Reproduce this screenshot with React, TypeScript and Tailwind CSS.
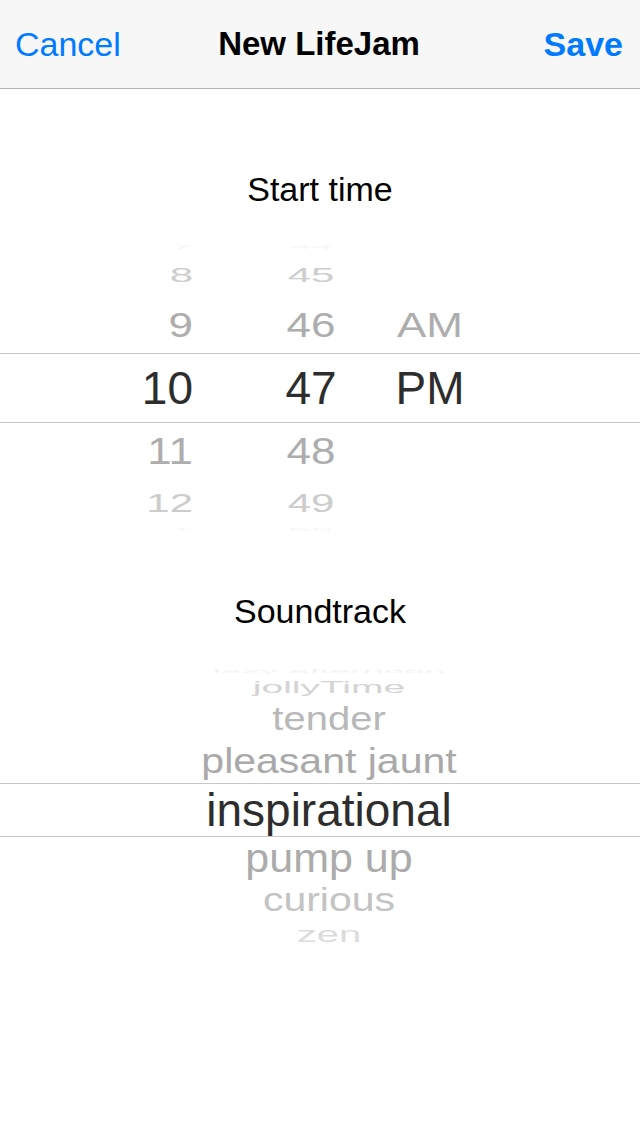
import React from 'react'

// Time wheel rows, from top to bottom. The selected row is drawn separately.
const timeAbove = [
  { id: 'r7', rowClass: 'h-[10px] leading-[10px] text-[40px] scale-y-[0.12] text-[#f6f6f6]', hour: '7', minute: '44', period: '' },
  { id: 'r8', rowClass: 'h-[45px] leading-[45px] text-[42px] scale-y-[0.5] text-[#cdcdcd]', hour: '8', minute: '45', period: '' },
  { id: 'r9', rowClass: 'h-[56px] leading-[56px] text-[44px] scale-y-[0.8] text-[#adadad]', hour: '9', minute: '46', period: 'AM' },
]

const timeBelow = [
  { id: 'r11', rowClass: 'h-[57px] leading-[57px] text-[44px] scale-y-[0.83] text-[#adadad]', hour: '11', minute: '48', period: '' },
  { id: 'r12', rowClass: 'h-[47px] leading-[47px] text-[42px] scale-y-[0.6] text-[#cccccc]', hour: '12', minute: '49', period: '' },
  { id: 'r1', rowClass: 'h-[6px] leading-[6px] text-[40px] scale-y-[0.1] text-[#f6f6f6]', hour: '1', minute: '50', period: '' },
]

// Soundtrack wheel rows
const tracksAbove = [
  { label: 'lazy afternoon', rowClass: 'h-[12px] leading-[12px] text-[37px] scale-y-[0.14] text-[#f3f3f3]' },
  { label: 'jollyTime', rowClass: 'h-[21px] leading-[21px] text-[39px] scale-y-[0.4] text-[#d4d4d4]' },
  { label: 'tender', rowClass: 'h-[41px] leading-[41px] text-[40px] scale-y-[0.83] text-[#b8b8b8]' },
  { label: 'pleasant jaunt', rowClass: 'h-[44px] leading-[44px] text-[41px] scale-y-[0.86] text-[#a9a9a9]' },
]

const tracksBelow = [
  { label: 'pump up', rowClass: 'h-[42px] leading-[42px] text-[43px] scale-y-[0.95] text-[#ababab]' },
  { label: 'curious', rowClass: 'h-[43px] leading-[43px] text-[41px] scale-y-[0.79] text-[#c3c3c3]' },
  { label: 'zen', rowClass: 'h-[24px] leading-[24px] text-[40px] scale-y-[0.56] text-[#dcdcdc]' },
]

function TimeRow({ rowClass, hour, minute, period }: { rowClass: string; hour: string; minute: string; period: string }) {
  return (
    <div className={`flex whitespace-nowrap ${rowClass}`}>
      <div className="w-[193px] text-right">{hour}</div>
      <div className="ml-[68px] w-[100px] text-center">{minute}</div>
      <div className="ml-[19px] w-[100px] text-center">{period}</div>
    </div>
  )
}

function TrackRow({ label, rowClass }: { label: string; rowClass: string }) {
  return (
    <div className={`pl-[18px] text-center whitespace-nowrap ${rowClass}`}>{label}</div>
  )
}

export default function App() {
  return (
    <div className="w-[640px] min-h-[1136px] bg-white font-['Liberation_Sans',Arial,sans-serif] flex flex-col overflow-hidden">
      {/* Nav bar */}
      <div className="h-[89px] bg-[#f7f7f7] border-b border-[#b2b2b2] grid grid-cols-[1fr_auto_1fr] items-center pl-[15px] pr-[17px] text-[34px]">
        <span className="justify-self-start text-[#007aff]">Cancel</span>
        <span className="font-bold text-black text-[33px]">New LifeJam</span>
        <span className="justify-self-end text-[#007aff] font-bold">Save</span>
      </div>

      {/* Start time */}
      <div className="mt-[80px] h-[40px] leading-[40px] text-center text-[34px] text-black">Start time</div>

      <div className="mt-[33px] flex flex-col">
        {timeAbove.map((r) => (
          <TimeRow key={r.id} rowClass={r.rowClass} hour={r.hour} minute={r.minute} period={r.period} />
        ))}
        <TimeRow
          rowClass="h-[70px] leading-[68px] text-[46px] text-[#2d2d2d] border-y border-[#c8c8c8]"
          hour="10"
          minute="47"
          period="PM"
        />
        {timeBelow.map((r) => (
          <TimeRow key={r.id} rowClass={r.rowClass} hour={r.hour} minute={r.minute} period={r.period} />
        ))}
      </div>

      {/* Soundtrack */}
      <div className="mt-[58px] h-[40px] leading-[40px] text-center text-[34px] text-black">Soundtrack</div>

      <div className="mt-[34px] flex flex-col">
        {tracksAbove.map((t) => (
          <TrackRow key={t.label} label={t.label} rowClass={t.rowClass} />
        ))}
        <TrackRow
          label="inspirational"
          rowClass="h-[54px] leading-[52px] text-[46px] text-[#2d2d2d] border-y border-[#c8c8c8]"
        />
        {tracksBelow.map((t) => (
          <TrackRow key={t.label} label={t.label} rowClass={t.rowClass} />
        ))}
      </div>
    </div>
  )
}
